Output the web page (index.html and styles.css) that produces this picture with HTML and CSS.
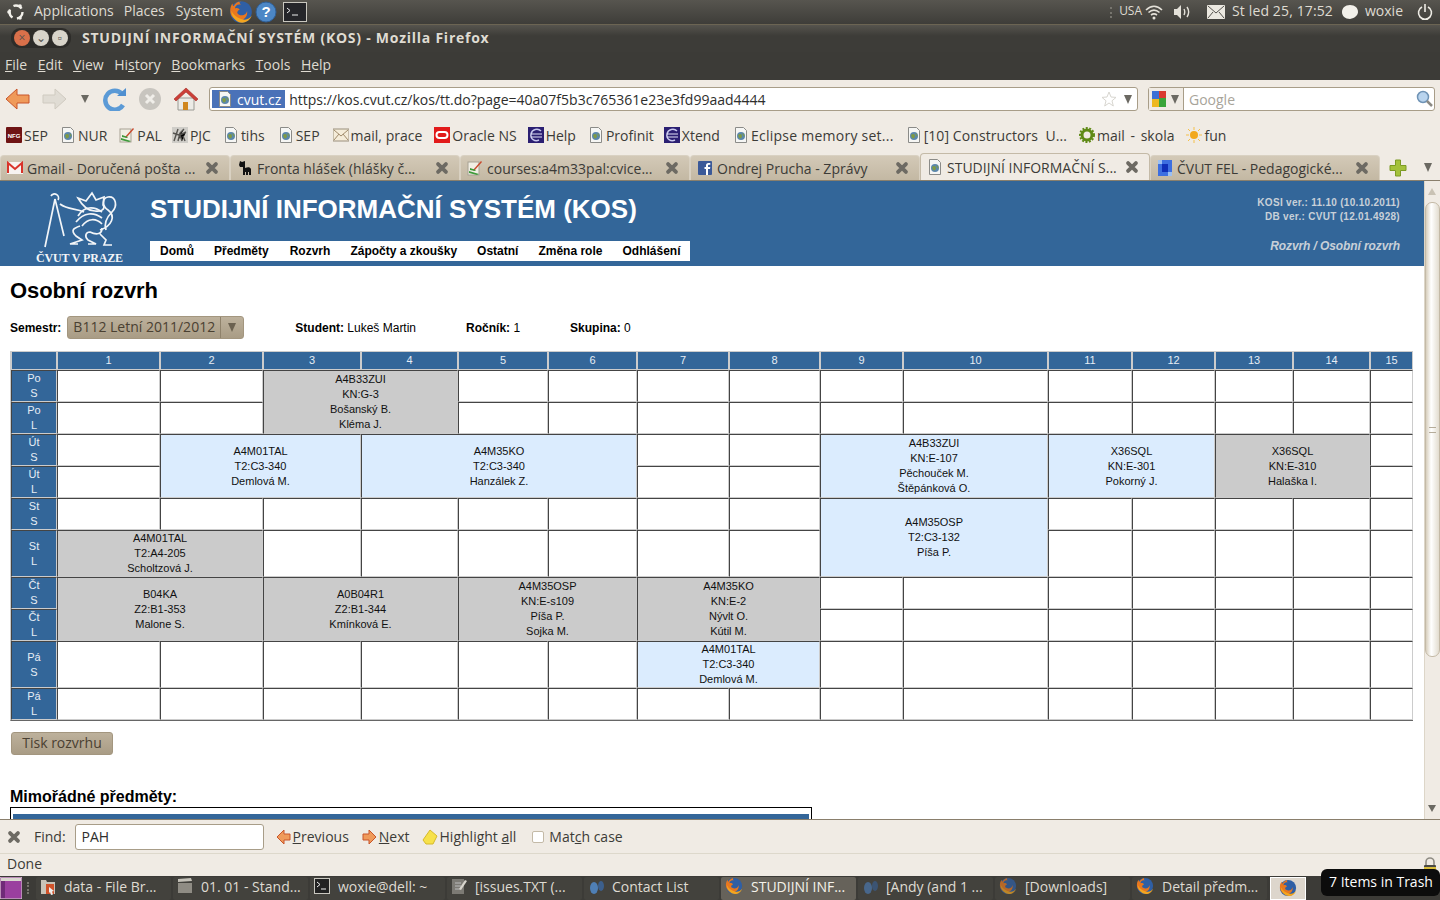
FILE: index.html
```html
<!DOCTYPE html>
<html lang="en">
<head>
    <meta charset="UTF-8">
    <title>STUDIJNÍ INFORMAČNÍ SYSTÉM (KOS) - Mozilla Firefox</title>
    <link rel="stylesheet" href="styles.css">
</head>
<body>
    <svg class="defs" width="0" height="0">
        <symbol id="i-doc" viewBox="0 0 16 16">
            <path d="M2.5 .5h8l3 3v12h-11z" fill="#f6f6f4" stroke="#8b8b88"/>
            <circle cx="8" cy="9" r="4" fill="#5b87ad"/>
            <path d="M5 8c2-2 4-1 4 1s-2 3-3 2M9 6c2 1 3 2 2 4" fill="#7f9a45"/>
        </symbol>
        <symbol id="i-x" viewBox="0 0 16 16">
            <path d="M3.5 3.5l9 9M12.500 3.500l-9 9" stroke="#6d6a63" stroke-width="4.400" stroke-linecap="round"/>
        </symbol>
        <symbol id="i-fox" viewBox="0 0 20 20">
            <circle cx="10" cy="10" r="9" fill="#2f5fa5"/>
            <path d="M10 1c-2 0-1 2 0 3-3-1-5 1-5 3 2-1 3 0 4 1-2 1-3 3-1 4 3 2 7 0 7-3 1 4-2 8-6 8-5 0-8-4-8-8 0-3 1-5 2-6 0 1 0 2 1 2 1-2 3-4 6-4z" fill="#e8771f"/>
            <path d="M2 9c0 5 4 10 9 10 4 0 7-3 8-6-2 3-5 4-8 3-4-1-7-3-9-7z" fill="#f3a51f"/>
        </symbol>
        <symbol id="i-eclipse" viewBox="0 0 16 16">
            <rect width="16" height="16" fill="#2b1f72"/>
            <path d="M13 4c-3-3-9-2-10 3s4 8 8 6" fill="none" stroke="#c9c8ee" stroke-width="1.500"/>
            <path d="M3 7h11M3 10h11" stroke="#e4e3f8"/>
        </symbol>
        <symbol id="i-pal" viewBox="0 0 16 16">
            <rect x="1" y="2" width="11" height="13" fill="#f1eee4" stroke="#a7a294"/>
            <path d="M6 10L14 1l1 1-8 9z" fill="#c9482c"/>
            <path d="M2 11l10 3-2 1-8-2zM3 8l6 2-1 1-5-1z" fill="#3d9a3a"/>
        </symbol>
    </svg>

    <div class="panel">
        <svg class="ubuntu" width="20" height="20" viewBox="0 0 20 20"><circle cx="10" cy="10" r="6.500" fill="none" stroke="#f2f0ea" stroke-width="2.400" stroke-dasharray="9 4.600"/><circle cx="3" cy="10" r="1.800" fill="#f2f0ea"/><circle cx="14" cy="4" r="1.800" fill="#f2f0ea"/><circle cx="14" cy="16" r="1.800" fill="#f2f0ea"/></svg>
        <span class="panel-item first">Applications</span>
        <span class="panel-item">Places</span>
        <span class="panel-item wide">System</span>
        <svg class="panel-fox" width="24" height="24"><use href="#i-fox"/></svg>
        <svg class="panel-help" width="22" height="22" viewBox="0 0 22 22"><circle cx="11" cy="11" r="10" fill="#4c87c6" stroke="#2f5f97"/><text x="11" y="16" class="help-mark">?</text></svg>
        <svg class="panel-term" width="24" height="20" viewBox="0 0 24 20"><rect x=".5" y=".5" width="23" height="19" fill="#25262a" stroke="#c9c7bf"/><path d="M4 6l3 2.500-3 2.500M9 13h6" stroke="#eee" fill="none"/></svg>
        <div class="panel-right">
            <span class="kbd-dots"></span>
            <span class="panel-small">USA</span>
            <svg class="wifi" width="18" height="16" viewBox="0 0 18 16"><path d="M1 6c5-5 11-5 16 0M3.500 8.500c3.500-3 7.500-3 11 0M6 11c2-1.500 4-1.500 6 0" fill="none" stroke="#e4e1d9" stroke-width="1.600"/><circle cx="9" cy="14" r="1.500" fill="#e4e1d9"/></svg>
            <svg class="speaker" width="18" height="16" viewBox="0 0 18 16"><path d="M1 5h3l4-4v14l-4-4H1z" fill="#e4e1d9"/><path d="M11 5c1 2 1 4 0 6M14 3c2 3 2 7 0 10" fill="none" stroke="#e4e1d9" stroke-width="1.400"/></svg>
            <svg class="envelope" width="18" height="14" viewBox="0 0 18 14"><rect width="18" height="14" rx="1" fill="#ebe8e0"/><path d="M1 1l8 7 8-7M1 13l5-6M17 13l-5-6" fill="none" stroke="#55534e"/></svg>
            <span class="panel-clock">St led 25, 17:52</span>
            <svg class="bubble" width="18" height="16" viewBox="0 0 18 16"><path d="M9 1c5 0 8 3 8 7 0 3-3 6-8 7-5 0-8-3-8-7s3-7 8-7z" fill="#f2f0ea"/></svg>
            <span class="panel-user">woxie</span>
            <svg class="power" width="16" height="18" viewBox="0 0 16 18"><path d="M5 4a6.500 6.500 0 1 0 6 0M8 1v8" fill="none" stroke="#eeece5" stroke-width="1.600"/></svg>
        </div>
    </div>

    <div class="titlebar">
        <div class="win-buttons">
            <span class="win-btn close">×</span>
            <span class="win-btn">⌄</span>
            <span class="win-btn">▫</span>
        </div>
        <span class="win-title">STUDIJNÍ INFORMAČNÍ SYSTÉM (KOS) - Mozilla Firefox</span>
    </div>

    <div class="menubar">
        <span><u>F</u>ile</span>
        <span><u>E</u>dit</span>
        <span><u>V</u>iew</span>
        <span>Hi<u>s</u>tory</span>
        <span><u>B</u>ookmarks</span>
        <span><u>T</u>ools</span>
        <span><u>H</u>elp</span>
    </div>

    <div class="navbar">
        <svg class="nav-back" width="26" height="26" viewBox="0 0 26 26"><path d="M12 3L1 13l11 10v-6h12V9H12z" fill="#ef9a5a" stroke="#c9552a"/></svg>
        <svg class="nav-forward" width="26" height="26" viewBox="0 0 26 26"><path d="M14 3l11 10-11 10v-6H2V9h12z" fill="#e0dcd4" stroke="#cfcac0"/></svg>
        <span class="nav-drop"></span>
        <svg class="nav-reload" width="24" height="24" viewBox="0 0 24 24"><path d="M19 7a9.500 9.500 0 1 0 1 11" fill="none" stroke="#5b9ad6" stroke-width="4.500"/><path d="M14 9h9V1z" fill="#4f8fd0"/></svg>
        <svg class="nav-stop" width="24" height="24" viewBox="0 0 24 24"><circle cx="12" cy="12" r="11" fill="#c8c5bf"/><path d="M8 8l8 8M16 8l-8 8" stroke="#f0eee9" stroke-width="3"/></svg>
        <svg class="nav-home" width="26" height="26" viewBox="0 0 26 26"><path d="M5 12h16v12H5z" fill="#ecebe6" stroke="#9a9a94"/><path d="M10 16h5v8h-5z" fill="#d0871f"/><path d="M1 13L13 2l12 11-2 2L13 6 3 15z" fill="#cc3f38" stroke="#a32a25" stroke-width=".6"/></svg>
        <div class="urlbar">
            <span class="identity"><svg width="16" height="16"><use href="#i-doc"/></svg>cvut.cz</span>
            <span class="url">https://kos.cvut.cz/kos/tt.do?page=40a07f5b3c765361e23e3fd99aad4444</span>
            <svg class="star" width="16" height="16" viewBox="0 0 16 16"><path d="M8 1l2 5 5 .4-4 3.400 1.300 5.200L8 12l-4.300 3L5 9.800 1 6.400 6 6z" fill="#fff" stroke="#d8d6d0"/></svg>
            <span class="arrow-down"></span>
        </div>
        <div class="searchbar">
            <span class="engine">
                <svg width="16" height="18" viewBox="0 0 16 18"><rect x="1" y="1" width="7" height="8" fill="#3b6fd4"/><rect x="8" y="1" width="7" height="7" fill="#d93a2f"/><rect x="8" y="8" width="7" height="9" fill="#3aa53a"/><rect x="1" y="9" width="7" height="8" fill="#edb81f"/></svg>
                <span class="arrow-down"></span>
            </span>
            <span class="search-hint">Google</span>
            <svg class="lens" width="18" height="18" viewBox="0 0 18 18"><circle cx="7" cy="7" r="5.500" fill="#b9d4ee" stroke="#6f93b5" stroke-width="1.500"/><path d="M11 11l5 5" stroke="#8c8a84" stroke-width="2.500"/></svg>
        </div>
    </div>

    <div class="bookmarks">
        <span class="bm"><svg width="16" height="16" viewBox="0 0 16 16"><rect width="16" height="16" rx="1" fill="#6f1414"/><text x="8" y="11" class="nfg">NFG</text></svg>SEP</span>
        <span class="bm"><svg width="16" height="16"><use href="#i-doc"/></svg>NUR</span>
        <span class="bm"><svg width="16" height="16"><use href="#i-pal"/></svg>PAL</span>
        <span class="bm"><svg width="16" height="16" viewBox="0 0 16 16"><rect width="16" height="16" fill="#cfcdc8"/><path d="M2 14L6 2M6 14l2-8 4-4M10 14l-2-6 6-3M13 14l-2-5M1 6l6 2" stroke="#55534f" stroke-width="1.400"/></svg>PJC</span>
        <span class="bm"><svg width="16" height="16"><use href="#i-doc"/></svg>tihs</span>
        <span class="bm"><svg width="16" height="16"><use href="#i-doc"/></svg>SEP</span>
        <span class="bm"><svg width="16" height="16" viewBox="0 0 16 16"><rect y="2" width="16" height="12" fill="#f5ecd9" stroke="#9a8f7c"/><path d="M1 3l7 6 7-6M1 13l5-6M15 13l-5-6" fill="none" stroke="#a08a6a"/></svg>mail, prace</span>
        <span class="bm"><svg width="16" height="16" viewBox="0 0 16 16"><rect width="16" height="16" fill="#e21a1a"/><rect x="2.500" y="5" width="11" height="6" rx="3" fill="none" stroke="#fff" stroke-width="2"/></svg>Oracle NS</span>
        <span class="bm"><svg width="16" height="16"><use href="#i-eclipse"/></svg>Help</span>
        <span class="bm"><svg width="16" height="16"><use href="#i-doc"/></svg>Profinit</span>
        <span class="bm"><svg width="16" height="16"><use href="#i-eclipse"/></svg>Xtend</span>
        <span class="bm"><svg width="16" height="16"><use href="#i-doc"/></svg>Eclipse memory set...</span>
        <span class="bm"><svg width="16" height="16"><use href="#i-doc"/></svg>[10] Constructors&nbsp; U...</span>
        <span class="bm"><svg width="16" height="16" viewBox="0 0 16 16"><circle cx="8" cy="8" r="5" fill="none" stroke="#5f8a16" stroke-width="3"/><circle cx="8" cy="8" r="7" fill="none" stroke="#5f8a16" stroke-width="2" stroke-dasharray="2 1.500"/></svg>mail - skola</span>
        <span class="bm"><svg width="16" height="16" viewBox="0 0 16 16"><circle cx="8" cy="8" r="4" fill="#f2a81d"/><path d="M8 0v3M8 13v3M0 8h3M13 8h3M2 2l2 2M12 12l2 2M2 14l2-2M12 4l2-2" stroke="#f5c04a"/></svg>fun</span>
    </div>

    <div class="tabs">
        <div class="tab"><svg width="16" height="16" viewBox="0 0 16 16"><rect y="2" width="16" height="12" fill="#f7f3f0"/><path d="M1 13V3l7 6 7-6v10" fill="none" stroke="#d9332a" stroke-width="2"/></svg><span class="tab-title">Gmail - Doručená pošta ...</span><svg class="tab-x" width="14" height="14"><use href="#i-x"/></svg></div>
        <div class="tab"><svg width="16" height="16" viewBox="0 0 16 16"><path d="M3 1l2 1 3-1v7c3-1 5-1 6 1v6h-2v-3h-1v3H9v-3H8v3H6V7H3L2 5z" fill="#111"/></svg><span class="tab-title">Fronta hlášek (hlášky č...</span><svg class="tab-x" width="14" height="14"><use href="#i-x"/></svg></div>
        <div class="tab"><svg width="16" height="16"><use href="#i-pal"/></svg><span class="tab-title">courses:a4m33pal:cvice...</span><svg class="tab-x" width="14" height="14"><use href="#i-x"/></svg></div>
        <div class="tab"><svg width="16" height="16" viewBox="0 0 16 16"><rect x="1" y="1" width="14" height="14" rx="1" fill="#3b5998"/><path d="M11 15V9h2l.3-2H11V5.800c0-.7.300-1 1-1h1.300V3H11.500C9.700 3 9 4 9 5.600V7H7.500v2H9v6z" fill="#fff"/></svg><span class="tab-title">Ondrej Prucha - Zprávy</span><svg class="tab-x" width="14" height="14"><use href="#i-x"/></svg></div>
        <div class="tab active"><svg width="16" height="16"><use href="#i-doc"/></svg><span class="tab-title">STUDIJNÍ INFORMAČNÍ S...</span><svg class="tab-x" width="14" height="14"><use href="#i-x"/></svg></div>
        <div class="tab"><svg width="16" height="16" viewBox="0 0 16 16"><rect x="1" width="14" height="16" fill="#3d6fe0"/><rect x="5" y="4" width="6" height="8" fill="#0f2fb8"/><rect x="1" width="4" height="4" fill="#9cc0f2"/><rect x="11" y="12" width="4" height="4" fill="#9cc0f2"/></svg><span class="tab-title">ČVUT FEL - Pedagogické...</span><svg class="tab-x" width="14" height="14"><use href="#i-x"/></svg></div>
        <svg class="tab-plus" width="18" height="18" viewBox="0 0 18 18"><path d="M6.500 1h5v5.500H17v5h-5.500V17h-5v-5.500H1v-5h5.500z" fill="#a4c13b" stroke="#7c9a24"/></svg>
        <span class="arrow-down tab-list"></span>
    </div>

    <div class="browser">
        <div class="page">
            <div class="kos-head">
                <div class="brand">
                    <svg width="80" height="58" viewBox="0 0 80 58" fill="none" stroke="#f2f5f8" stroke-width="1.700">
                        <path d="M15 9L5 57M15 9l9 37M11 6a4 4 0 1 1 7 4"/>
                        <path d="M20 14c8 6 16 4 24 8"/>
                        <path d="M38 8l8 3 6-8 4 7 8-3-1 8c3 4-2 7-8 6-6 0-12-4-17-13z"/>
                        <path d="M38 26c6-10 16-10 24-4M36 32c8-10 18-10 26-4M42 36c6-8 14-8 20-2"/>
                        <path d="M60 40c12-4 16-14 8-20-6-4-6-12 0-13 8-1 10 9 4 15-6 6-8 12-6 18"/>
                        <path d="M40 36c-6 2-10 4-4 10l6 4-12 4h8"/>
                        <path d="M62 38c0 8-8 6-12 4-4 0-6 4-2 8l8 4h-8M60 44l6 6-2 5h8"/>
                    </svg>
                    <span class="brand-name">ČVUT V PRAZE</span>
                </div>
                <div class="head-main">
                    <div class="kos-title">STUDIJNÍ INFORMAČNÍ SYSTÉM (KOS)</div>
                    <nav class="kos-nav">
                        <a>Domů</a>
                        <a>Předměty</a>
                        <a>Rozvrh</a>
                        <a>Zápočty a zkoušky</a>
                        <a>Ostatní</a>
                        <a>Změna role</a>
                        <a>Odhlášení</a>
                    </nav>
                </div>
                <div class="head-info">
                    <div>KOSI ver.: 11.10 (10.10.2011)</div>
                    <div>DB ver.: CVUT (12.01.4928)</div>
                    <div class="crumb">Rozvrh / Osobní rozvrh</div>
                </div>
            </div>

            <div class="content">
                <h1>Osobní rozvrh</h1>

                <div class="filter">
                    <b>Semestr:</b>
                    <span class="select">B112 Letní 2011/2012<span class="select-arrow"></span></span>
                    <span class="meta student"><b>Student:</b> Lukeš Martin</span>
                    <span class="meta year"><b>Ročník:</b> 1</span>
                    <span class="meta group"><b>Skupina:</b> 0</span>
                </div>

                <table class="tt">
                    <colgroup>
                        <col class="c46"><col class="c103"><col class="c103"><col class="c98"><col class="c97"><col class="c90"><col class="c89"><col class="c92"><col class="c91"><col class="c83"><col class="c145"><col class="c84"><col class="c83"><col class="c78"><col class="c77"><col class="c43">
                    </colgroup>
                    <tr class="hdr"><th></th><th>1</th><th>2</th><th>3</th><th>4</th><th>5</th><th>6</th><th>7</th><th>8</th><th>9</th><th>10</th><th>11</th><th>12</th><th>13</th><th>14</th><th>15</th></tr>
                    <tr>
                        <th>Po<br>S</th><td></td><td></td>
                        <td class="grey" colspan="2" rowspan="2">A4B33ZUI<br>KN:G-3<br>Bošanský B.<br>Kléma J.</td>
                        <td></td><td></td><td></td><td></td><td></td><td></td><td></td><td></td><td></td><td></td><td></td>
                    </tr>
                    <tr>
                        <th>Po<br>L</th><td></td><td></td>
                        <td></td><td></td><td></td><td></td><td></td><td></td><td></td><td></td><td></td><td></td><td></td>
                    </tr>
                    <tr>
                        <th>Út<br>S</th><td></td>
                        <td class="blue" colspan="2" rowspan="2">A4M01TAL<br>T2:C3-340<br>Demlová M.</td>
                        <td class="blue" colspan="3" rowspan="2">A4M35KO<br>T2:C3-340<br>Hanzálek Z.</td>
                        <td></td><td></td>
                        <td class="blue" colspan="2" rowspan="2">A4B33ZUI<br>KN:E-107<br>Pěchouček M.<br>Štěpánková O.</td>
                        <td class="blue" colspan="2" rowspan="2">X36SQL<br>KN:E-301<br>Pokorný J.</td>
                        <td class="grey" colspan="2" rowspan="2">X36SQL<br>KN:E-310<br>Halaška I.</td>
                        <td></td>
                    </tr>
                    <tr>
                        <th>Út<br>L</th><td></td><td></td><td></td><td></td>
                    </tr>
                    <tr>
                        <th>St<br>S</th><td></td><td></td><td></td><td></td><td></td><td></td><td></td><td></td>
                        <td class="blue" colspan="2" rowspan="2">A4M35OSP<br>T2:C3-132<br>Píša P.</td>
                        <td></td><td></td><td></td><td></td><td></td>
                    </tr>
                    <tr class="tall">
                        <th>St<br>L</th>
                        <td class="grey" colspan="2">A4M01TAL<br>T2:A4-205<br>Scholtzová J.</td>
                        <td></td><td></td><td></td><td></td><td></td><td></td>
                        <td></td><td></td><td></td><td></td><td></td>
                    </tr>
                    <tr>
                        <th>Čt<br>S</th>
                        <td class="grey" colspan="2" rowspan="2">B04KA<br>Z2:B1-353<br>Malone S.</td>
                        <td class="grey" colspan="2" rowspan="2">A0B04R1<br>Z2:B1-344<br>Kmínková E.</td>
                        <td class="grey" colspan="2" rowspan="2">A4M35OSP<br>KN:E-s109<br>Píša P.<br>Sojka M.</td>
                        <td class="grey" colspan="2" rowspan="2">A4M35KO<br>KN:E-2<br>Nývlt O.<br>Kútil M.</td>
                        <td></td><td></td><td></td><td></td><td></td><td></td><td></td>
                    </tr>
                    <tr>
                        <th>Čt<br>L</th><td></td><td></td><td></td><td></td><td></td><td></td><td></td>
                    </tr>
                    <tr class="tall">
                        <th>Pá<br>S</th><td></td><td></td><td></td><td></td><td></td><td></td>
                        <td class="blue" colspan="2">A4M01TAL<br>T2:C3-340<br>Demlová M.</td>
                        <td></td><td></td><td></td><td></td><td></td><td></td><td></td>
                    </tr>
                    <tr>
                        <th>Pá<br>L</th><td></td><td></td><td></td><td></td><td></td><td></td><td></td><td></td><td></td><td></td><td></td><td></td><td></td><td></td><td></td>
                    </tr>
                </table>

                <button class="print">Tisk rozvrhu</button>

                <h2>Mimořádné předměty:</h2>
                <div class="extra"><div class="extra-head">Název předmětu</div></div>
            </div>
        </div>

        <div class="scrollbar">
            <span class="sb-up"></span>
            <div class="sb-thumb"><span class="sb-grip"></span></div>
            <span class="sb-down"></span>
        </div>
    </div>

    <div class="findbar">
        <svg class="find-x" width="14" height="14"><use href="#i-x"/></svg>
        <span class="find-label">Find:</span>
        <span class="find-input">PAH</span>
        <span class="find-btn prev"><svg width="15" height="16" viewBox="0 0 15 16"><path d="M8 1L1 8l7 7v-4h6V5H8z" fill="#ef9a5a" stroke="#c9552a"/></svg><span><u>P</u>revious</span></span>
        <span class="find-btn next"><svg width="15" height="16" viewBox="0 0 15 16"><path d="M7 1l7 7-7 7v-4H1V5h6z" fill="#ef9a5a" stroke="#c9552a"/></svg><span><u>N</u>ext</span></span>
        <span class="find-btn high"><svg width="16" height="18" viewBox="0 0 16 18"><path d="M1 12L8 2l7 6-4 8H4z" fill="#f7e14a" stroke="#d6b92a"/></svg><span>Highlight <u>a</u>ll</span></span>
        <span class="checkbox"></span>
        <span class="match">Mat<u>c</u>h case</span>
    </div>

    <div class="statusbar">Done</div>

    <div class="taskbar">
        <svg class="launcher" width="22" height="22" viewBox="0 0 22 22"><rect width="22" height="22" fill="#9a3f9f" stroke="#d9d7cf"/><rect x="1" y="1" width="20" height="3" fill="#d9d7cf"/><rect x="1" y="4" width="4" height="17" fill="#6f2a78"/></svg>
        <span class="task-dots"></span>
        <div class="task"><svg width="16" height="18" viewBox="0 0 16 18"><path d="M1 3h5l1 2h8v12H1z" fill="#c9c4b8"/><path d="M6 7h8v10H6z" fill="#d0532a"/><path d="M9 10l5 4-2 .5 1 3-2 .500-1-3-1 1z" fill="#eee"/></svg><span>data - File Br...</span></div>
        <div class="task"><svg width="16" height="18" viewBox="0 0 16 18"><rect x="1" y="6" width="14" height="10" fill="#8f8c84"/><path d="M1 2l13-1 1 3-14 1z" fill="#c4c1b8"/></svg><span>01. 01 - Stand...</span></div>
        <div class="task"><svg width="16" height="16" viewBox="0 0 16 16"><rect x=".5" y=".5" width="15" height="15" fill="#222" stroke="#c9c7bf"/><path d="M3 4l3 2.500L3 9M7 11h5" stroke="#eee" fill="none"/></svg><span>woxie@dell: ~</span></div>
        <div class="task"><svg width="16" height="18" viewBox="0 0 16 18"><rect x="1" y="2" width="12" height="15" fill="#7c7a74"/><path d="M4 6h6M4 9h6M4 12h6" stroke="#bbb"/><path d="M8 12l6-9 2 1-6 9z" fill="#d8d5cd"/></svg><span>[issues.TXT (...</span></div>
        <div class="task"><svg width="16" height="18" viewBox="0 0 16 18"><ellipse cx="6" cy="11" rx="4" ry="6" fill="#4f7fb5"/><ellipse cx="13" cy="9" rx="3" ry="5" fill="#3c5f8c"/></svg><span>Contact List</span></div>
        <div class="task on"><svg width="18" height="18"><use href="#i-fox"/></svg><span>STUDIJNÍ INF...</span></div>
        <div class="task"><svg width="16" height="18" viewBox="0 0 16 18"><ellipse cx="6" cy="11" rx="4" ry="6" fill="#48678c"/><ellipse cx="13" cy="9" rx="3" ry="5" fill="#3c5473"/></svg><span>[Andy (and 1 ...</span></div>
        <div class="task"><svg class="dim" width="18" height="18"><use href="#i-fox"/></svg><span>[Downloads]</span></div>
        <div class="task"><svg width="18" height="18"><use href="#i-fox"/></svg><span>Detail předm...</span></div>
        <div class="task-box"><svg width="18" height="18"><use href="#i-fox"/></svg></div>
    </div>

    <svg class="lock" width="14" height="18" viewBox="0 0 14 18"><path d="M3 8V5a4 4 0 0 1 8 0v3" fill="none" stroke="#8f8c84" stroke-width="1.600"/><rect x="1" y="8" width="12" height="9" rx="1" fill="#4b4a45"/><rect x="1" y="10" width="12" height="3" fill="#d9bd3b"/></svg>
    <div class="trash-tip">7 Items in Trash</div>
</body>
</html>
```

FILE: styles.css
```css
* {
    box-sizing: border-box;
}

html, body {
    margin: 0;
    height: 900px;
    overflow: hidden;
}

body {
    position: relative;
    display: flex;
    flex-direction: column;
    width: 1440px;
    font-family: "Open Sans", sans-serif;
    font-size: 14px;
    color: #3c3b37;
    background: #f0ebe4;
}

svg {
    display: block;
    flex: none;
}

.defs {
    position: absolute;
}

.arrow-down {
    display: inline-block;
    width: 0;
    height: 0;
    border-left: 4px solid transparent;
    border-right: 4px solid transparent;
    border-top: 9px solid #6b6962;
}

/* top panel */
.panel {
    display: flex;
    align-items: center;
    flex: none;
    height: 24px;
    padding-left: 6px;
    color: #dfdbd2;
    background: linear-gradient(#57554f, #3e3d39);
}

.panel-item, .panel-small, .panel-clock, .panel-user {
    margin-bottom: 4px;
}

.panel-item {
    margin-left: 10px;
}

.panel-item.first {
    margin-left: 8px;
}

.panel-item.wide {
    margin-left: 11px;
}

.panel-fox {
    margin-left: 6px;
}

.panel-help {
    margin-left: 2px;
}

.panel-term {
    margin-left: 6px;
}

.help-mark {
    font-family: "Liberation Sans", sans-serif;
    font-size: 15px;
    font-weight: bold;
    fill: #fff;
    text-anchor: middle;
}

.panel-right {
    display: flex;
    align-items: center;
    margin-left: auto;
    padding-right: 7px;
}

.kbd-dots {
    width: 2px;
    height: 11px;
    border-left: 2px dotted #77756e;
}

.panel-small {
    margin-left: 7px;
    font-size: 12px;
}

.wifi {
    margin-left: 3px;
}

.speaker {
    margin-left: 10px;
}

.envelope {
    margin-left: 16px;
}

.panel-clock {
    margin-left: 7px;
    letter-spacing: .13px;
}

.bubble {
    margin-left: 8px;
}

.panel-user {
    margin-left: 6px;
}

.power {
    margin-left: 14px;
}

/* window title and menu */
.titlebar {
    display: flex;
    align-items: center;
    flex: none;
    height: 28px;
    padding: 0 0 2px 11px;
    border-top: 1px solid #6b6453;
    background: linear-gradient(#56544e, #3d3c38 40%);
}

.win-buttons {
    display: flex;
    gap: 3px;
    padding: 2px 3px;
    background: #2d2c29;
    border-radius: 9px;
}

.win-btn {
    width: 16px;
    height: 16px;
    border-radius: 50%;
    background: #d8d4ca;
    color: #55534e;
    font-size: 12px;
    line-height: 15px;
    text-align: center;
}

.win-btn.close {
    background: #d9704a;
}

.win-title {
    margin-left: 11px;
    color: #dfdbd2;
    font-weight: bold;
    font-size: 14px;
    letter-spacing: .75px;
}

.menubar {
    display: flex;
    align-items: center;
    gap: 10.5px;
    flex: none;
    height: 28px;
    padding: 0 0 3px 5px;
    color: #dfdbd2;
    background: #3c3b37;
}

/* navigation toolbar */
.navbar {
    display: flex;
    align-items: center;
    flex: none;
    height: 38px;
    padding-left: 5px;
    background: #f0ebe4;
}

.nav-forward {
    margin-left: 10px;
}

.nav-drop {
    width: 0;
    height: 0;
    margin-left: 14px;
    border-left: 4px solid transparent;
    border-right: 4px solid transparent;
    border-top: 8px solid #6b6962;
}

.nav-reload {
    margin-left: 14px;
}

.nav-stop {
    margin-left: 11px;
}

.nav-home {
    margin-left: 11px;
}

.urlbar {
    display: flex;
    align-items: center;
    width: 929px;
    height: 24px;
    margin-left: 10px;
    padding: 2px;
    background: #fff;
    border: 1px solid #a89d88;
    border-radius: 3px;
}

.identity {
    display: flex;
    align-items: center;
    gap: 4px;
    height: 18px;
    padding: 0 4px 0 5px;
    color: #fff;
    background: #4a72b8;
}

.url {
    margin-left: 4px;
    color: #2e2e2c;
}

.star {
    margin-left: auto;
}

.urlbar .arrow-down {
    margin: 0 3px 0 7px;
}

.searchbar {
    display: flex;
    align-items: center;
    width: 287px;
    height: 24px;
    margin-left: 10px;
    background: #fff;
    border: 1px solid #a89d88;
    border-radius: 3px;
}

.engine {
    display: flex;
    align-items: center;
    gap: 4px;
    height: 22px;
    padding: 0 4px 0 2px;
    background: #f0ebe4;
    border-right: 1px solid #a89d88;
}

.search-hint {
    margin-left: 5px;
    color: #a8a49a;
}

.lens {
    margin-left: auto;
}

/* bookmarks */
.bookmarks {
    display: flex;
    align-items: center;
    gap: 12px;
    flex: none;
    height: 36px;
    padding: 0 0 2px 6px;
}

.bm {
    display: flex;
    align-items: center;
    gap: 2px;
    white-space: nowrap;
}

.bm:nth-child(4) {
    margin-left: -2px;
}

.bm:nth-child(6), .bm:nth-child(7), .bm:nth-child(12) {
    margin-left: 1px;
}

.bm:nth-child(9) {
    margin-left: -1px;
}

.bm:nth-child(11) {
    margin-left: -2px;
}

.bm:nth-child(12) {
    letter-spacing: .25px;
}

.bm:nth-child(13) {
    letter-spacing: .08px;
}

.bm:nth-child(14) {
    word-spacing: 2px;
}

.nfg {
    font-family: "Liberation Sans", sans-serif;
    font-size: 6px;
    font-weight: bold;
    fill: #fff;
    text-anchor: middle;
}

/* tabs */
.tabs {
    display: flex;
    align-items: flex-end;
    flex: none;
    height: 26px;
}

.tab {
    display: flex;
    align-items: center;
    width: 230px;
    height: 25px;
    padding: 0 10px 0 6px;
    white-space: nowrap;
    background: linear-gradient(#d3c9b7, #c3b8a3);
    border: 1px solid #d9d1c2;
    border-bottom: 0;
    border-radius: 4px 4px 0 0;
}

.tab.active {
    height: 27px;
    background: #f0ebe4;
    border-color: #c4baa7;
}

.tab-title {
    margin-left: 4px;
}

.tab-x {
    margin-left: auto;
}

.tab-plus {
    margin: 0 0 3px 9px;
}

.tab-list {
    margin: 0 0 8px 17px;
}

/* page area */
.browser {
    display: flex;
    flex: none;
    height: 640px;
    background: #fff;
    border-top: 1px solid #8a7f6c;
    border-bottom: 1px solid #8a7f6c;
}

.page {
    width: 1424px;
    overflow: hidden;
    font-family: "Liberation Sans", sans-serif;
    color: #000;
}

.kos-head {
    display: flex;
    height: 85px;
    background: #336699;
}

.brand {
    display: flex;
    flex-direction: column;
    align-items: center;
    width: 150px;
    padding: 9px 0 0 9px;
    color: #f2f5f8;
}

.brand-name {
    margin-top: 3px;
    font-family: "Liberation Serif", serif;
    font-size: 12px;
    font-weight: bold;
    line-height: 14px;
    letter-spacing: -.15px;
    white-space: nowrap;
}

.head-main {
    padding-top: 12px;
}

.kos-title {
    color: #fff;
    font-size: 26px;
    font-weight: bold;
    line-height: 32px;
    white-space: nowrap;
}

.kos-nav {
    display: flex;
    margin-top: 16px;
    background: #fff;
}

.kos-nav a {
    padding: 0 10px;
    font-size: 12px;
    font-weight: bold;
    line-height: 20px;
}

.kos-nav a:nth-child(2) {
    padding-right: 11px;
}

.head-info {
    margin-left: auto;
    padding: 15px 24px 0 0;
    color: #c8d0d8;
    font-size: 10px;
    font-weight: bold;
    line-height: 14px;
    letter-spacing: .3px;
    text-align: right;
}

.crumb {
    margin-top: 15px;
    font-size: 12px;
    font-style: italic;
    letter-spacing: -.1px;
}

.content {
    padding: 12px 10px 0;
}

h1 {
    margin: 0;
    font-size: 22px;
    line-height: 26px;
    letter-spacing: -.1px;
}

.filter {
    display: flex;
    align-items: center;
    height: 23px;
    margin-top: 12px;
    font-size: 12px;
}

.select {
    position: relative;
    width: 177px;
    height: 23px;
    margin-left: 6px;
    padding-left: 5px;
    color: #4a4031;
    font-family: "Open Sans", sans-serif;
    font-size: 14px;
    line-height: 20px;
    background: linear-gradient(#bdb19c, #a99c85);
    border: 1px solid #a3967f;
    border-radius: 3px;
}

.select-arrow {
    position: absolute;
    top: 0;
    right: 0;
    width: 23px;
    height: 21px;
    border-left: 1px solid #8f826b;
}

.select-arrow::after {
    content: "";
    position: absolute;
    top: 6px;
    left: 7px;
    border-left: 4px solid transparent;
    border-right: 4px solid transparent;
    border-top: 9px solid #6b6150;
}

.student {
    margin-left: 51px;
}

.year {
    margin-left: 50px;
}

.group {
    margin-left: 50px;
}

/* timetable */
.tt {
    width: 1403px;
    margin-top: 12px;
    table-layout: fixed;
    border-collapse: separate;
    border-spacing: 0;
    border-left: 1px solid #ccc;
    border-bottom: 1px solid #666;
    font-size: 11px;
    line-height: 15px;
}

.c46 { width: 46px; }
.c103 { width: 103px; }
.c98 { width: 98px; }
.c97 { width: 97px; }
.c90 { width: 90px; }
.c89 { width: 89px; }
.c92 { width: 92px; }
.c91 { width: 91px; }
.c83 { width: 83px; }
.c145 { width: 145px; }
.c84 { width: 84px; }
.c78 { width: 78px; }
.c77 { width: 77px; }
.c43 { width: 43px; }

.tt tr {
    height: 32px;
}

.tt tr.tall {
    height: 47px;
}

.tt tr.hdr {
    height: 19px;
}

.tt th, .tt td {
    padding: 0;
    text-align: center;
    vertical-align: middle;
    border-top: 1px solid #444;
    border-left: 1px solid #444;
    border-right: 1px solid #ccc;
    border-bottom: 1px solid #ccc;
}

.tt th {
    color: #e6edf5;
    font-weight: normal;
    background: #336699;
}

.tt .hdr th {
    border-color: #ccc;
}

.tt td {
    color: #111;
}

.tt .grey {
    background: #cbcbcb;
}

.tt .blue {
    background: #dbecfe;
}

.print {
    display: block;
    width: 102px;
    height: 23px;
    margin: 11px 0 0 1px;
    padding: 0 0 2px;
    color: #4a4031;
    font-family: "Open Sans", sans-serif;
    font-size: 14px;
    background: linear-gradient(#bdb19c, #a99c85);
    border: 1px solid #a3967f;
    border-radius: 3px;
}

h2 {
    margin: 33px 0 0;
    font-size: 16px;
    line-height: 18px;
}

.extra {
    width: 802px;
    height: 40px;
    margin-top: 1px;
    padding: 6px 2px 0;
    border: 1px solid #000;
}

.extra-head {
    color: #fff;
    font-size: 11px;
    line-height: 18px;
    text-align: center;
    background: #336699;
}

/* scrollbar */
.scrollbar {
    position: relative;
    width: 16px;
    background: #f0ebe4;
    border-left: 1px solid #ddd6c8;
}

.sb-up, .sb-down {
    position: absolute;
    left: 3px;
    border-left: 4px solid transparent;
    border-right: 4px solid transparent;
}

.sb-up {
    top: 7px;
    border-bottom: 7px solid #c9c2b4;
}

.sb-down {
    bottom: 7px;
    border-top: 7px solid #6b6962;
}

.sb-thumb {
    position: absolute;
    top: 21px;
    left: 0;
    width: 15px;
    height: 455px;
    background: linear-gradient(90deg, #d8cfbd, #fff 40%, #e2dccf);
    border: 1px solid #c4baa7;
    border-radius: 7px;
}

.sb-grip {
    position: absolute;
    top: 224px;
    left: 3px;
    width: 7px;
    height: 6px;
    border-top: 1px solid #b5ac9a;
    border-bottom: 1px solid #b5ac9a;
}

/* find bar and status bar */
.findbar {
    display: flex;
    align-items: center;
    flex: none;
    height: 34px;
    padding-left: 7px;
    border-bottom: 1px solid #ddd8cb;
}

.find-label {
    margin-left: 13px;
}

.find-input {
    width: 189px;
    height: 26px;
    margin-left: 9px;
    padding-left: 6px;
    color: #2e2e2c;
    line-height: 24px;
    background: #fff;
    border: 1px solid #a89d88;
    border-radius: 3px;
}

.find-btn {
    display: flex;
    align-items: center;
    gap: 2px;
}

.prev {
    margin-left: 12px;
}

.next {
    margin-left: 13px;
}

.high {
    margin-left: 12px;
}

.checkbox {
    width: 12px;
    height: 12px;
    margin-left: 16px;
    background: #fff;
    border: 1px solid #c4baa7;
    border-radius: 2px;
}

.match {
    margin-left: 5px;
}

.statusbar {
    flex: none;
    height: 22px;
    padding-left: 7px;
    line-height: 19px;
}

/* task bar */
.taskbar {
    display: flex;
    align-items: center;
    gap: 2px;
    flex: none;
    height: 24px;
    color: #dfdbd2;
    background: #3c3b37;
}

.launcher {
    margin-right: 3px;
}

.task-dots {
    width: 2px;
    height: 12px;
    margin-right: 5px;
    border-left: 2px dotted #77756e;
}

.task {
    display: flex;
    align-items: center;
    gap: 8px;
    width: 135px;
    height: 23px;
    padding: 0 0 4px 4px;
    white-space: nowrap;
    background: #43423d;
    border-radius: 2px;
}

.task.on {
    color: #f5f2ea;
    background: #66625a;
}

.dim {
    opacity: .7;
}

.task-box {
    display: flex;
    align-items: center;
    justify-content: center;
    width: 36px;
    height: 23px;
    margin-left: 1px;
    background: #ddd6cc;
    border: 1px solid #fff;
}

.lock {
    position: absolute;
    top: 857px;
    left: 1423px;
}

.trash-tip {
    position: absolute;
    top: 869px;
    left: 1321px;
    width: 119px;
    height: 27px;
    padding-left: 8px;
    color: #fff;
    line-height: 26px;
    white-space: nowrap;
    background: #0c0c0c;
    border-radius: 6px;
}
```
